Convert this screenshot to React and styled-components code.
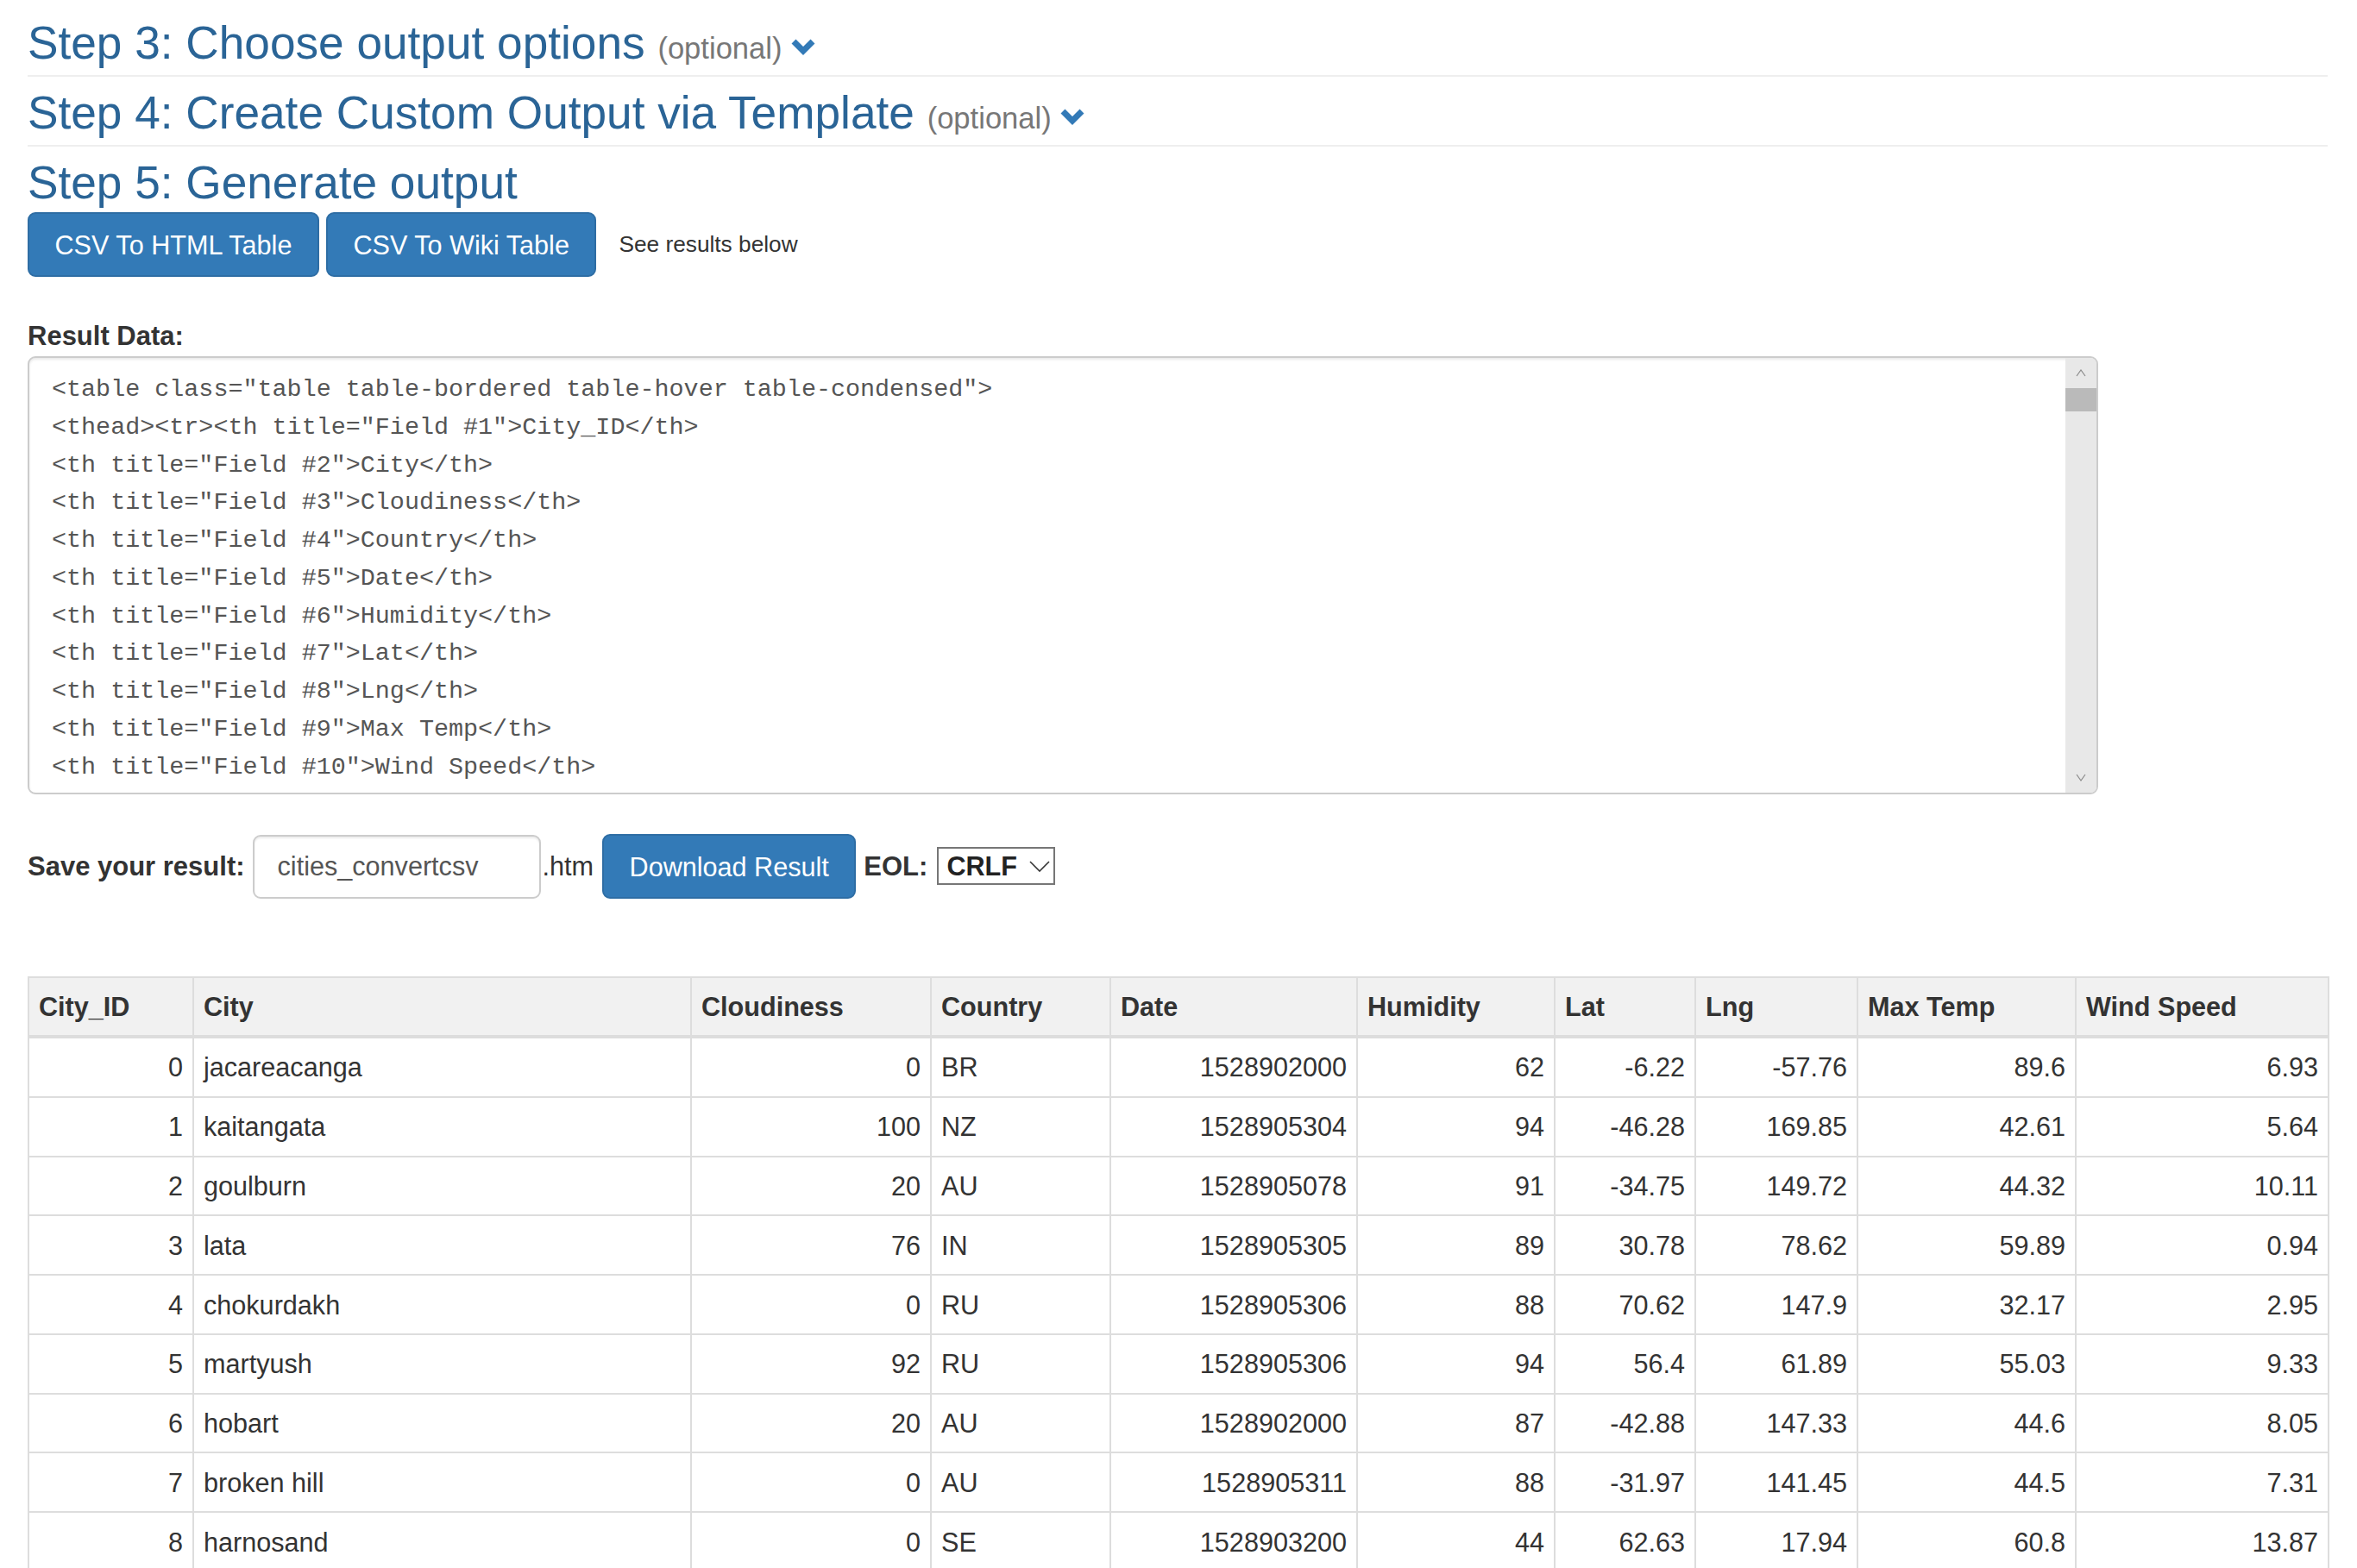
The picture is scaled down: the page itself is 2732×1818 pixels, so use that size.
import React from "react";
import styled, { createGlobalStyle } from "styled-components";

const GlobalStyle = createGlobalStyle`
  html, body { margin: 0; padding: 0; background: #fff; }
  body {
    font-family: "Liberation Sans", Arial, Helvetica, sans-serif;
    color: #333;
  }
  *, *::before, *::after { box-sizing: border-box; }
`;

const Page = styled.div`
  height: 1818px;
  overflow: hidden;
  padding: 21px 34px 0 32px;
`;

const StepHeader = styled.div`
  padding-bottom: ${(p) => (p.$divider ? "8px" : "0")};
  border-bottom: ${(p) => (p.$divider ? "2px solid #eee" : "none")};
  margin-bottom: ${(p) => (p.$divider ? "13px" : "0")};
`;

const StepTitle = styled.h3`
  margin: 0;
  font-size: 53.2px;
  line-height: 57.75px;
  font-weight: 400;
  color: #2a6496;
  white-space: nowrap;
`;

const Optional = styled.small`
  font-size: 65%;
  color: #777;
  font-weight: 400;
  line-height: 1;
`;

const Chevron = styled.svg`
  width: 28px;
  height: 20px;
  margin-left: 10px;
  vertical-align: 4px;
`;

const ButtonRow = styled.div`
  display: flex;
  align-items: center;
  gap: 8px;
  margin-top: 6px;
`;

const Button = styled.button`
  font-family: "Liberation Sans", Arial, sans-serif;
  font-size: 30.6px;
  line-height: 44px;
  padding: 13.5px 29.5px;
  margin-left: ${(p) => p.$ml || 0}px;
  color: #fff;
  background: #337ab7;
  border: 2px solid #2e6da4;
  border-radius: 9px;
  white-space: nowrap;
  cursor: pointer;
`;

const Hint = styled.span`
  font-size: 26.25px;
  color: #333;
  margin-left: 18px;
`;

const FieldLabel = styled.label`
  display: block;
  font-weight: 700;
  font-size: 31px;
  line-height: 43.75px;
  margin: 47px 0 1px;
`;

const TextFrame = styled.div`
  display: flex;
  width: 2400px;
  height: 508px;
  border: 2px solid #ccc;
  border-radius: 9px;
  overflow: hidden;
  box-shadow: inset 0 2px 3px rgba(0, 0, 0, 0.09);
  background: #fff;
`;

const Code = styled.textarea`
  flex: 1;
  border: none;
  outline: none;
  resize: none;
  overflow: hidden;
  background: transparent;
  padding: 15px 26px 0;
  margin: 0;
  font-family: "Liberation Mono", "DejaVu Sans Mono", monospace;
  font-size: 28.4px;
  line-height: 43.75px;
  color: #555;
  white-space: pre;
`;

const ScrollTrack = styled.div`
  width: 36px;
  flex: none;
  background: #e8e8e8;
  display: flex;
  flex-direction: column;
`;

const ScrollArrow = styled.div`
  height: 35px;
  display: flex;
  align-items: center;
  justify-content: center;
`;

const ScrollThumb = styled.div`
  height: 27px;
  background: #bababa;
`;

const ScrollFill = styled.div`
  flex: 1;
`;

const SaveRow = styled.div`
  display: flex;
  align-items: center;
  margin-top: 46px;
  font-size: 30.6px;
  line-height: 43.75px;
`;

const InlineLabel = styled.label`
  font-weight: 700;
  font-size: 31px;
  margin-left: ${(p) => p.$ml || 0}px;
  white-space: nowrap;
`;

const FileInput = styled.input`
  width: 334px;
  height: 74px;
  margin-left: 9px;
  border: 2px solid #ccc;
  border-radius: 9px;
  padding: 0 27px;
  font-family: "Liberation Sans", Arial, sans-serif;
  font-size: 30.6px;
  color: #555;
  box-shadow: inset 0 2px 2px rgba(0, 0, 0, 0.075);
  outline: none;
`;

const Ext = styled.span`
  margin-left: 2px;
`;

const SelectWrap = styled.div`
  position: relative;
  margin-left: 11px;
`;

const Select = styled.select`
  appearance: none;
  -webkit-appearance: none;
  width: 137px;
  height: 44px;
  border: 2px solid #767676;
  border-radius: 0;
  background: #fff;
  font-family: "Liberation Sans", Arial, sans-serif;
  font-weight: 700;
  font-size: 30.6px;
  color: #222;
  padding: 0 0 0 9px;
  outline: none;
`;

const SelectArrow = styled.svg`
  position: absolute;
  right: 6px;
  top: 16px;
  pointer-events: none;
`;

const DataTable = styled.table`
  margin-top: 90px;
  width: 2666px;
  table-layout: fixed;
  border-collapse: collapse;
  border: 2px solid #ddd;
  font-size: 30.6px;
  line-height: 44px;
  color: #333;
`;

const Col = styled.col`
  width: ${(p) => p.$w}px;
`;

const Th = styled.th`
  padding: 11px;
  text-align: left;
  font-weight: 700;
  background: #f1f1f1;
  border: 2px solid #ddd;
  border-bottom-width: 4px;
  white-space: nowrap;
`;

const Td = styled.td`
  padding: 11.4px 11px;
  text-align: ${(p) => p.$align};
  border: 2px solid #ddd;
  white-space: nowrap;
`;

const columns = [
  { name: "City_ID", w: 191, align: "right" },
  { name: "City", w: 577, align: "left" },
  { name: "Cloudiness", w: 278, align: "right" },
  { name: "Country", w: 208, align: "left" },
  { name: "Date", w: 286, align: "right" },
  { name: "Humidity", w: 229, align: "right" },
  { name: "Lat", w: 163, align: "right" },
  { name: "Lng", w: 188, align: "right" },
  { name: "Max Temp", w: 253, align: "right" },
  { name: "Wind Speed", w: 293, align: "right" },
];

const rows = [
  ["0", "jacareacanga", "0", "BR", "1528902000", "62", "-6.22", "-57.76", "89.6", "6.93"],
  ["1", "kaitangata", "100", "NZ", "1528905304", "94", "-46.28", "169.85", "42.61", "5.64"],
  ["2", "goulburn", "20", "AU", "1528905078", "91", "-34.75", "149.72", "44.32", "10.11"],
  ["3", "lata", "76", "IN", "1528905305", "89", "30.78", "78.62", "59.89", "0.94"],
  ["4", "chokurdakh", "0", "RU", "1528905306", "88", "70.62", "147.9", "32.17", "2.95"],
  ["5", "martyush", "92", "RU", "1528905306", "94", "56.4", "61.89", "55.03", "9.33"],
  ["6", "hobart", "20", "AU", "1528902000", "87", "-42.88", "147.33", "44.6", "8.05"],
  ["7", "broken hill", "0", "AU", "1528905311", "88", "-31.97", "141.45", "44.5", "7.31"],
  ["8", "harnosand", "0", "SE", "1528903200", "44", "62.63", "17.94", "60.8", "13.87"],
];

const codeText = [
  '<table class="table table-bordered table-hover table-condensed">',
  '<thead><tr><th title="Field #1">City_ID</th>',
  ...columns.slice(1).map((c, i) => `<th title="Field #${i + 2}">${c.name}</th>`),
  "</tr></thead>",
  "<tbody><tr>",
  '<td align="right">0</td>',
  "<td>jacareacanga</td>",
  '<td align="right">0</td>',
  "<td>BR</td>",
].join("\n");

function ChevronIcon() {
  return (
    <Chevron viewBox="0 0 28 20">
      <polyline
        points="3,4 14,15 25,4"
        fill="none"
        stroke="#337ab7"
        strokeWidth="7"
        strokeLinejoin="miter"
      />
    </Chevron>
  );
}

function Step({ title, optional, divider }) {
  return (
    <StepHeader $divider={divider}>
      <StepTitle>
        {title}
        {optional && (
          <>
            {" "}
            <Optional>(optional)</Optional>
            <ChevronIcon />
          </>
        )}
      </StepTitle>
    </StepHeader>
  );
}

function ArrowGlyph({ up }) {
  return (
    <svg width="12" height="9" viewBox="0 0 12 9">
      <polyline
        points={up ? "1,8 6,1 11,8" : "1,1 6,8 11,1"}
        fill="none"
        stroke="#8a8a8a"
        strokeWidth="1.2"
      />
    </svg>
  );
}

export default function App() {
  return (
    <>
      <GlobalStyle />
      <Page>
        <Step title="Step 3: Choose output options" optional divider />
        <Step title="Step 4: Create Custom Output via Template" optional divider />
        <Step title="Step 5: Generate output" />

        <ButtonRow>
          <Button>CSV To HTML Table</Button>
          <Button>CSV To Wiki Table</Button>
          <Hint>See results below</Hint>
        </ButtonRow>

        <FieldLabel htmlFor="result">Result Data:</FieldLabel>
        <TextFrame>
          <Code id="result" readOnly value={codeText} spellCheck={false} />
          <ScrollTrack>
            <ScrollArrow>
              <ArrowGlyph up />
            </ScrollArrow>
            <ScrollThumb />
            <ScrollFill />
            <ScrollArrow>
              <ArrowGlyph />
            </ScrollArrow>
          </ScrollTrack>
        </TextFrame>

        <SaveRow>
          <InlineLabel htmlFor="fname">Save your result:</InlineLabel>
          <FileInput id="fname" defaultValue="cities_convertcsv" />
          <Ext>.htm</Ext>
          <Button $ml={10}>Download Result</Button>
          <InlineLabel $ml={9} htmlFor="eol">EOL:</InlineLabel>
          <SelectWrap>
            <Select id="eol" defaultValue="CRLF">
              <option>CRLF</option>
              <option>LF</option>
            </Select>
            <SelectArrow width="24" height="13" viewBox="0 0 24 13">
              <polyline points="1,1 12,12 23,1" fill="none" stroke="#333" strokeWidth="1.6" />
            </SelectArrow>
          </SelectWrap>
        </SaveRow>

        <DataTable>
          <colgroup>
            {columns.map((c) => (
              <Col key={c.name} $w={c.w} />
            ))}
          </colgroup>
          <thead>
            <tr>
              {columns.map((c) => (
                <Th key={c.name}>{c.name}</Th>
              ))}
            </tr>
          </thead>
          <tbody>
            {rows.map((r) => (
              <tr key={r[0]}>
                {r.map((v, i) => (
                  <Td key={i} $align={columns[i].align}>
                    {v}
                  </Td>
                ))}
              </tr>
            ))}
          </tbody>
        </DataTable>
      </Page>
    </>
  );
}
